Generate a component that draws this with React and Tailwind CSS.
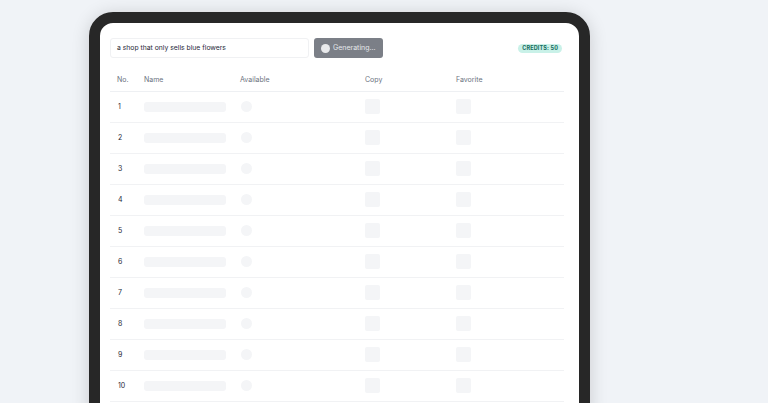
const rows = [1, 2, 3, 4, 5, 6, 7, 8, 9, 10];

const App = () => {
  return (
    <div className="h-[403px] w-[768px] overflow-hidden bg-[#f0f3f7] font-['Inter',sans-serif]">
      {/* Device frame */}
      <div className="ml-[89px] mt-[12px] w-[501px] h-[420px] rounded-[24px] border-[11px] border-[#272727] bg-white shadow-[0_2px_18px_rgba(0,0,0,0.16)]">
        <div className="pl-[10px] pr-[15px] pt-[15px]">
          {/* Top bar */}
          <div className="flex items-center">
            <div className="flex h-[20px] w-[199px] items-center rounded-[3px] border border-[#f0f1f3] px-[6px] text-[6.8px] text-[#1f2937]">
              a shop that only sells blue flowers
            </div>
            <div className="ml-[5px] flex h-[20px] w-[69px] items-center gap-[3px] rounded-[3px] bg-[#7b7f87] px-[7px] text-[7px] text-[#e5e7eb]">
              <span className="h-[9px] w-[9px] rounded-full bg-[#e9eaec]" />
              <span>Generating...</span>
            </div>
            <div className="ml-auto mr-[2px] flex h-[9px] items-center rounded-full bg-[#c9f1e8] px-[4px] text-[5.5px] font-bold tracking-wide text-[#156b5c]">
              CREDITS: 50
            </div>
          </div>

          {/* Table */}
          <table className="mt-[11px] w-full table-fixed border-collapse text-left text-[7px]">
            <thead>
              <tr className="h-[22px] border-b border-[#eef0f3] text-[#6b7280]">
                <th className="w-[27px] pl-[7px] font-normal">No.</th>
                <th className="w-[96px] pl-[7px] font-normal">Name</th>
                <th className="w-[125px] pl-[7px] font-normal">Available</th>
                <th className="w-[91px] pl-[7px] font-normal">Copy</th>
                <th className="pl-[7px] font-normal">Favorite</th>
              </tr>
            </thead>
            <tbody>
              {rows.map((n) => (
                <tr key={n} className="h-[31px] border-b border-[#f1f2f4] text-[#1f2937]">
                  <td className="pl-[8px] pt-[2px]">{n}</td>
                  <td className="pl-[7px]">
                    <div className="h-[10px] w-[82px] rounded-[3px] bg-[#f4f5f7]" />
                  </td>
                  <td className="pl-[8px]">
                    <div className="h-[11px] w-[11px] rounded-full bg-[#f4f5f7]" />
                  </td>
                  <td className="pl-[7px]">
                    <div className="h-[15px] w-[15px] rounded-[2px] bg-[#f4f5f7]" />
                  </td>
                  <td className="pl-[7px]">
                    <div className="h-[15px] w-[15px] rounded-[2px] bg-[#f4f5f7]" />
                  </td>
                </tr>
              ))}
            </tbody>
          </table>
        </div>
      </div>
    </div>
  );
};

export default App;
